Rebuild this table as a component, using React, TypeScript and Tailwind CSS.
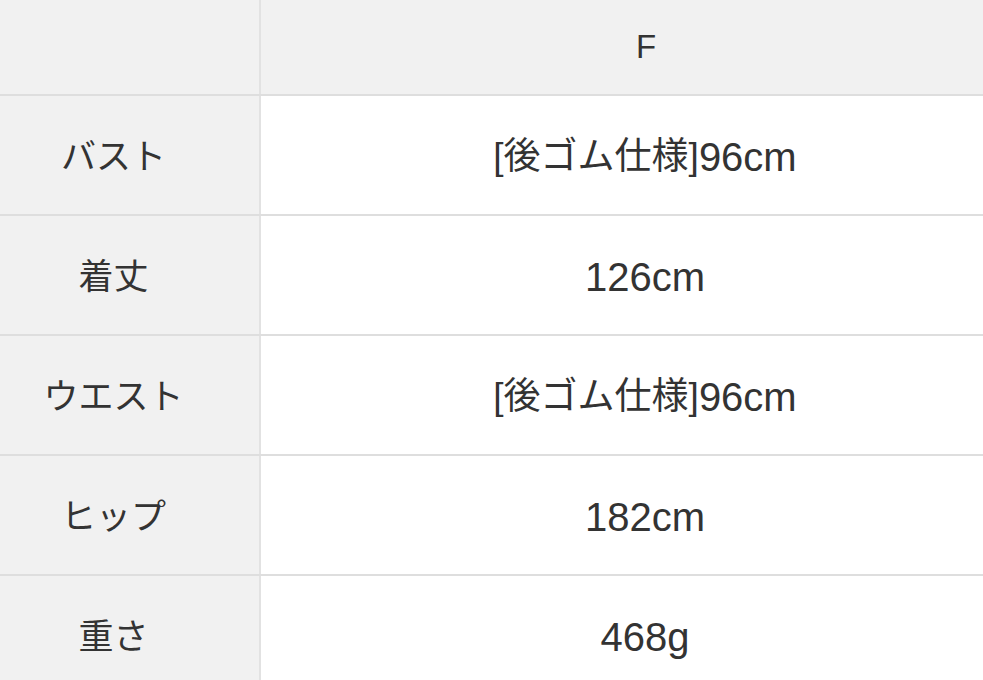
/**
 * SizeTable - product measurement table (F size).
 */
const rows: {label: string; value: React.ReactNode}[] = [
 {label: 'バスト', value: (<><span className="text-[37px]">[後ゴム仕様]</span>96cm</>)},
 {label: '着丈', value: '126cm'},
 {label: 'ウエスト', value: (<><span className="text-[37px]">[後ゴム仕様]</span>96cm</>)},
 {label: 'ヒップ', value: '182cm'},
 {label: '重さ', value: '468g'},
];

const font = "font-['Liberation_Sans','Noto_Sans_CJK_JP',sans-serif]";

export default function App() {return (<div className={`w-[983px] h-[680px] overflow-hidden bg-white text-[#333333] ${font}`}>
 {/* Header */}
 <div className="flex h-[96px] border-b-2 border-[#dedede] bg-[#f1f1f1]">
 <div className="w-[261px] shrink-0 border-r-2 border-[#e2e2e2]" />
 <div className="flex-1 flex items-center justify-center pl-[48px] text-[33px]">F</div>
 </div>

 {/* Rows */}
 {rows.map((r) => (<div key={r.label} className="flex h-[120px] shrink-0 border-b-2 border-[#dedede]">
 <div className="w-[261px] shrink-0 flex items-center justify-center pr-[32px] pt-1 bg-[#f1f1f1] border-r-2 border-[#e2e2e2] text-[35px]">
 {r.label}
 </div>
 <div className="flex-1 flex items-center justify-center pl-[46px] pt-1 text-[40px]">
 {r.value}
 </div>
 </div>))}
 </div>);}
